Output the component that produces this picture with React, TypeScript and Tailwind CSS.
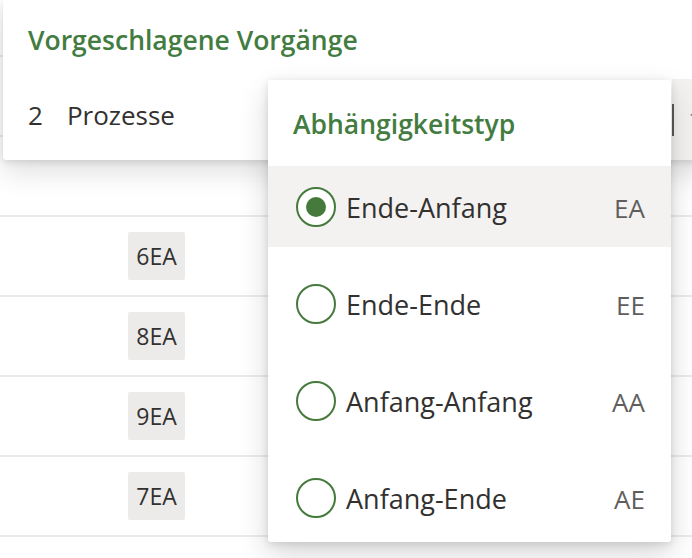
import React, { useState } from 'react';

type DependencyType = {
  code: string;
  label: string;
};

const dependencyTypes: DependencyType[] = [
  { code: 'EA', label: 'Ende-Anfang' },
  { code: 'EE', label: 'Ende-Ende' },
  { code: 'AA', label: 'Anfang-Anfang' },
  { code: 'AE', label: 'Anfang-Ende' },
];

// Rows of the table lying behind the card and the menu
const tableRows: (string | null)[] = [null, null, null, '6EA', '8EA', '9EA', '7EA', null];

function RadioCircle({ checked }: { checked: boolean }) {
  return (
    <div className="flex h-[40px] w-[40px] shrink-0 items-center justify-center rounded-full border-2 border-[#467a3c] bg-white">
      {checked && <div className="h-[20px] w-[20px] rounded-full bg-[#467a3c]" />}
    </div>
  );
}

export default function App() {
  const [selected, setSelected] = useState('EA');

  return (
    <div
      className="relative h-[558px] w-[692px] overflow-hidden bg-white text-[#323130]"
      style={{ fontFamily: '"Segoe UI", "Open Sans", sans-serif' }}
    >
      {/* Table in the background */}
      <div className="flex flex-col">
        {tableRows.map((badge, i) => (
          <div
            key={i}
            className={`flex items-center border-b-2 border-[#edebe9] ${i === 0 ? 'h-[57px]' : 'h-[80px]'}`}
          >
            {badge && (
              <div className="ml-[128px] flex h-[48px] w-[57px] items-center justify-center rounded-[2px] bg-[#edebe9] text-[23px] text-[#323130]">
                {badge}
              </div>
            )}
          </div>
        ))}
      </div>

      {/* Suggested tasks card */}
      <div className="absolute left-[3px] top-0 flex h-[160px] w-[712px] flex-col rounded-b-[3px] bg-white shadow-[0_12px_28px_0_rgba(0,0,0,0.13),0_2px_7px_0_rgba(0,0,0,0.11)]">
        <div className="flex h-[79px] items-center pl-[25px] pt-[2px] text-[26.5px] font-semibold text-[#437c41]">
          Vorgeschlagene Vorgänge
        </div>
        <div className="flex flex-1">
          <div className="flex w-[669px] items-center gap-[24px] pb-[8px] pl-[25px] text-[26px] text-[#323130]">
            <span>2</span>
            <span>Prozesse</span>
          </div>
          <div className="flex flex-1 items-center bg-[#f3f2f1]">
            <div className="h-[32px] w-[2px] bg-[#5c5b5a]" />
            <span className="ml-[14px] text-[26px] text-[#8a8886]">1</span>
          </div>
        </div>
      </div>

      {/* Dependency type menu */}
      <div className="absolute left-[268px] top-[80px] flex w-[403px] flex-col rounded-[3px] bg-white pb-[4px] shadow-[0_12px_30px_0_rgba(0,0,0,0.16),0_2px_8px_0_rgba(0,0,0,0.12)]">
        <div className="flex h-[86px] items-center pl-[25px] pt-[4px] text-[26.5px] font-semibold text-[#437c41]">
          Abhängigkeitstyp
        </div>
        <div className="flex flex-col gap-[16px]">
          {dependencyTypes.map((item) => {
            const checked = selected === item.code;
            return (
              <button
                key={item.code}
                onClick={() => setSelected(item.code)}
                className={`flex h-[81px] items-center pl-[28px] pr-[26px] text-left ${checked ? 'bg-[#f3f2f1]' : 'bg-white'}`}
              >
                <RadioCircle checked={checked} />
                <span className="ml-[10px] flex-1 pt-[3px] text-[27px] text-[#323130]">{item.label}</span>
                <span className="pt-[3px] text-[26px] text-[#605e5c]">{item.code}</span>
              </button>
            );
          })}
        </div>
      </div>
    </div>
  );
}
